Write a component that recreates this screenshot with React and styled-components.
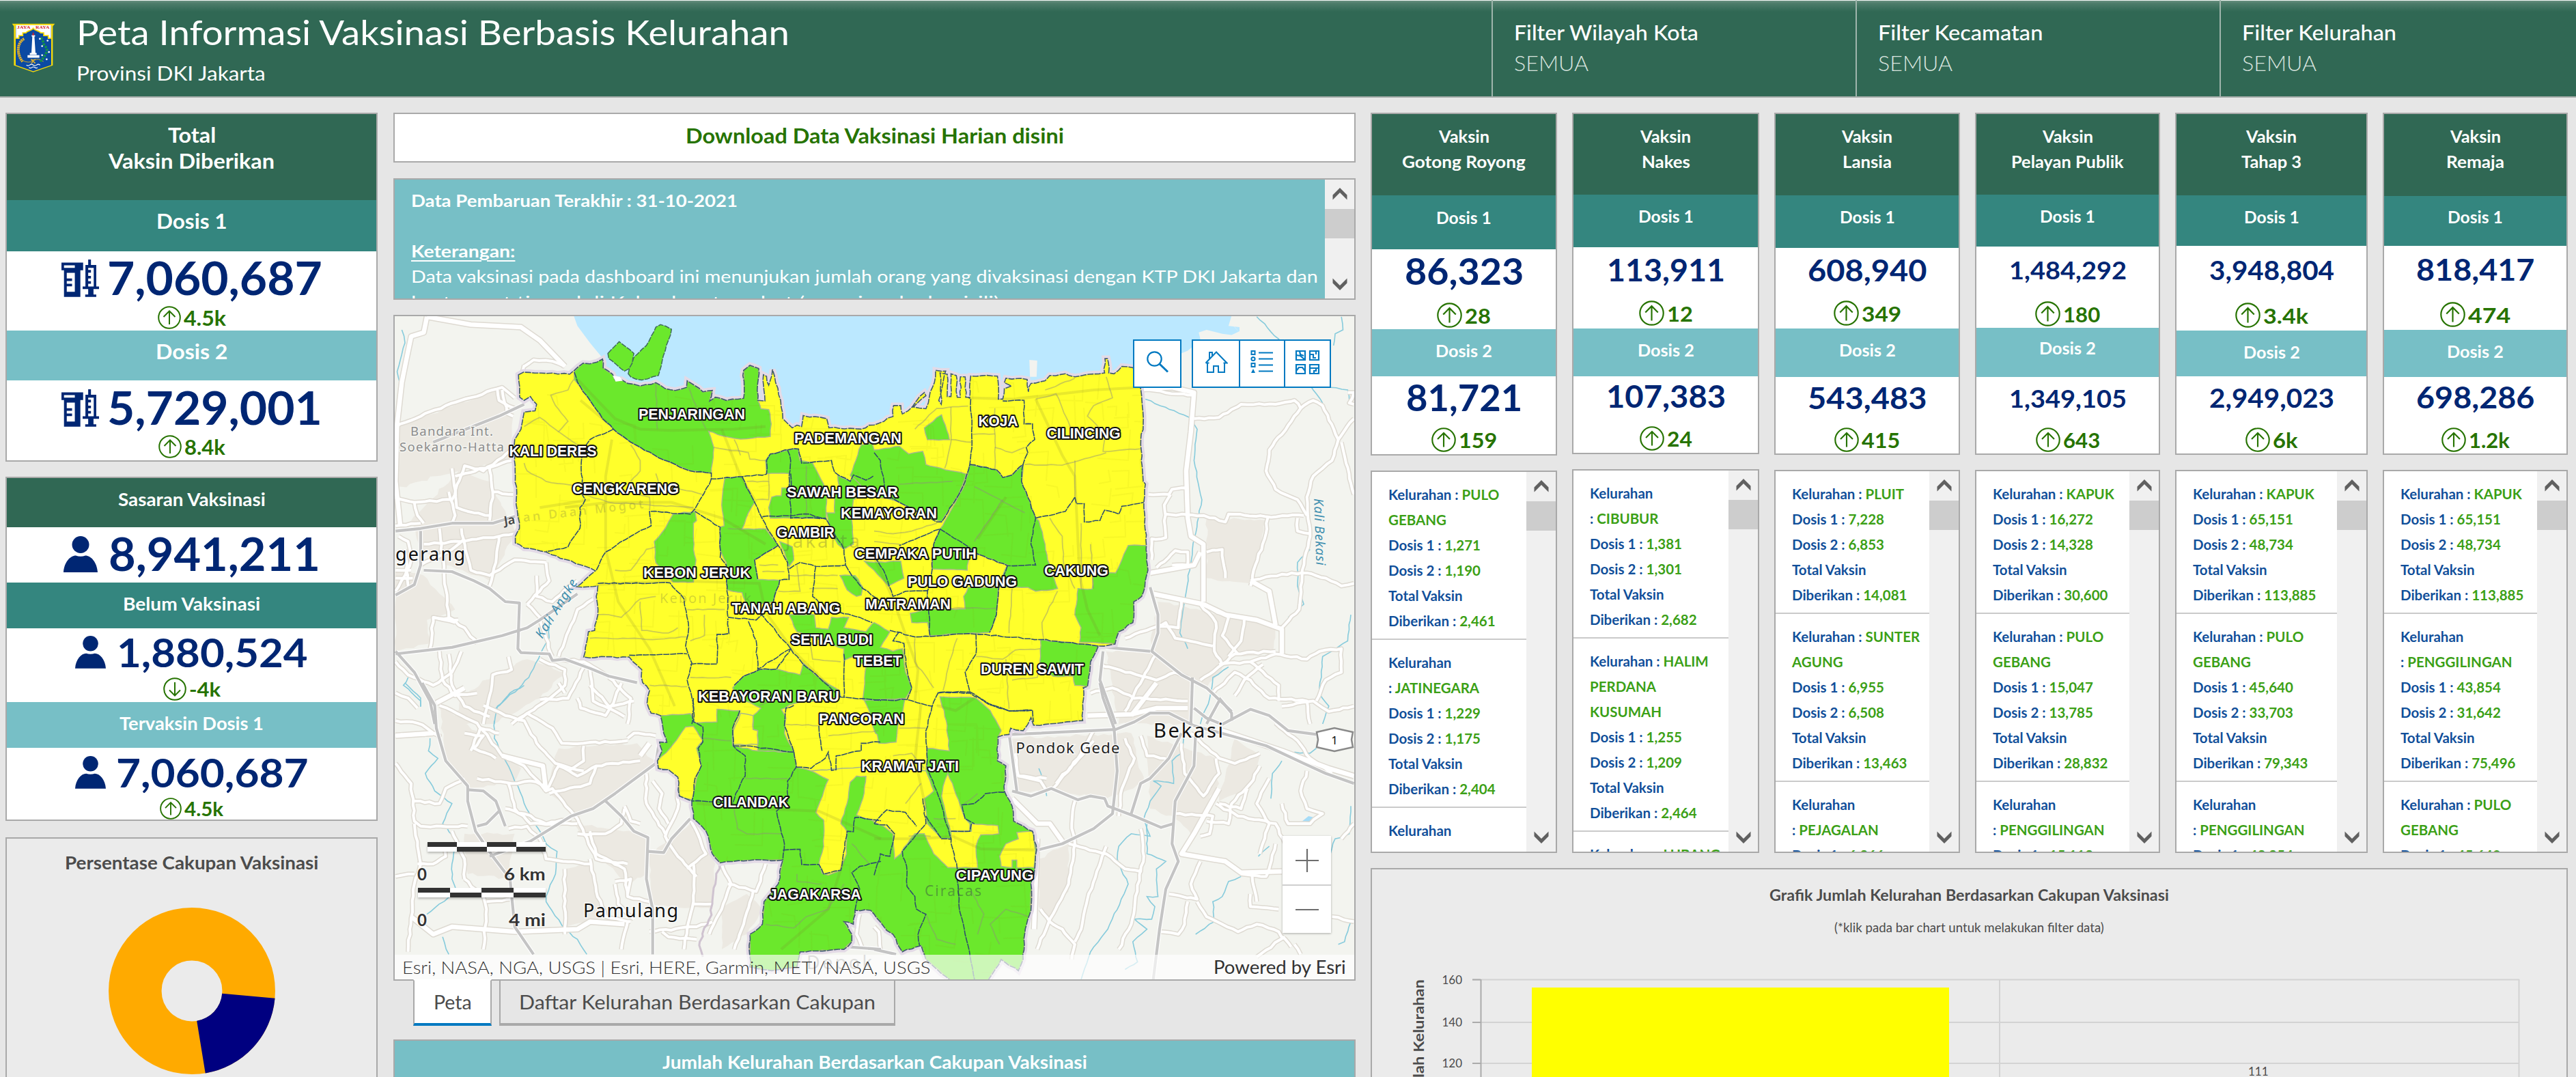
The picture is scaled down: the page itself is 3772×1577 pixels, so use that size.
import React, { useLayoutEffect, useRef, useState } from "react";
import styled, { createGlobalStyle } from "styled-components";

const C = {
  page: "#e6e6e6",
  line: "#a9a9a9",
  dark: "#306854",
  teal: "#34867f",
  light: "#77bfc6",
  navy: "#002673",
  green: "#267300",
  link: "#0079c1",
  grey: "#4c4c4c",
};

const GlobalStyle = createGlobalStyle`
  *, *::before, *::after { box-sizing: border-box; }
  body {
    margin: 0;
    background: ${C.page};
    font-family: Lato, "Open Sans", sans-serif;
    overflow: hidden;
  }
`;

/* ---------- text ---------- */

const Measure = styled.span`
  display: block;
  flex: none;
  width: ${(p) => p.$w}px;
  line-height: ${(p) => p.$lh || p.$size}px;
  height: ${(p) => p.$lh || p.$size}px;
`;

const Line = styled.span`
  display: inline-block;
  white-space: pre;
  transform-origin: 0 50%;
  font-size: ${(p) => p.$size}px;
  font-weight: ${(p) => p.$weight || 400};
  line-height: ${(p) => p.$lh || p.$size}px;
  color: ${(p) => p.$color || "inherit"};
  text-decoration: ${(p) => (p.$underline ? "underline 2px" : "none")};
  text-underline-offset: 4px;
`;

/* Widens or narrows the glyphs of a line so that it fills its measure. */
function Fit({ w, children, ...rest }) {
  const ref = useRef(null);
  const [k, setK] = useState(1);
  useLayoutEffect(() => {
    setK(w / ref.current.offsetWidth);
  }, [w]);
  return (
    <Measure $w={w} $size={rest.$size} $lh={rest.$lh}>
      <Line ref={ref} {...rest} style={{ transform: `scaleX(${k})` }}>
        {children}
      </Line>
    </Measure>
  );
}

/* ---------- page frame ---------- */

const Page = styled.div`
  width: 3772px;
  height: 1577px;
  overflow: hidden;
  display: flex;
  flex-direction: column;
  background: ${C.page};
`;

const Header = styled.header`
  height: 143px;
  flex: none;
  display: flex;
  color: #fff;
  background: linear-gradient(#f4f7f6 0, #f4f7f6 1px, #68907f 1px, #4d7c6a 5px, ${C.dark} 17px);
  border-bottom: 2px solid #a3aba8;
`;

const LogoBox = styled.div`
  width: 112px;
  padding: 34px 0 0 17px;
`;

const Titles = styled.div`
  flex: 1;
  display: flex;
  flex-direction: column;
  align-items: flex-start;
  padding-top: 18px;
  gap: 11px;
`;

const Filters = styled.div`
  display: flex;
`;

const Filter = styled.div`
  width: ${(p) => p.$w}px;
  border-left: 2px solid #9fb5ac;
  padding: 27px 0 0 31px;
  display: flex;
  flex-direction: column;
  align-items: flex-start;
  gap: 5px;
`;

const Main = styled.main`
  display: flex;
  flex: 1;
  min-height: 0;
  padding: 22px 12px 0 8px;
`;

const Column = styled.div`
  width: ${(p) => p.$w}px;
  margin-right: ${(p) => p.$gap || 0}px;
  flex: none;
  display: flex;
  flex-direction: column;
`;

const Panel = styled.section`
  flex: none;
  height: ${(p) => p.$h}px;
  margin-bottom: ${(p) => p.$mb || 0}px;
  border: 2px solid ${C.line};
  background: ${(p) => p.$bg || "#fff"};
  overflow: hidden;
  display: flex;
  flex-direction: column;
`;

const Band = styled.div`
  height: ${(p) => p.$h}px;
  padding-top: ${(p) => p.$pt}px;
  flex: none;
  display: flex;
  flex-direction: column;
  align-items: center;
  color: #fff;
  background: ${(p) => p.$bg};
`;

const MetricBox = styled.div`
  height: ${(p) => p.$h}px;
  padding-top: ${(p) => p.$pt}px;
  flex: none;
  display: flex;
  flex-direction: column;
  align-items: center;
`;

const ValueRow = styled.div`
  display: flex;
  align-items: center;
  gap: ${(p) => p.$gap || 0}px;
  height: ${(p) => p.$h}px;
  color: ${C.navy};
`;

const DeltaRow = styled.div`
  display: flex;
  align-items: center;
  gap: 4px;
  height: 36px;
  margin-top: ${(p) => p.$mt}px;
  color: ${C.green};
`;

/* ---------- icons ---------- */

const VaccineIcon = () => (
  <svg width="55" height="55" viewBox="268 1062 163 163" fill={C.navy}>
    <path
      fillRule="evenodd"
      d="M268 1075h94v34h-12v115h-71v-115h-11zM279 1087v11h47v-11zM291 1120v24h23v11h-23v12h23v11h-23v24h35v-82z"
    />
    <path
      fillRule="evenodd"
      d="M384 1062h12v24h23v93h12v11h-24v24h12v10h-48v-10h13v-24h-24v-11h12v-93h12zM384 1098v9h12v12h-12v14h12v11h-12v12h12v11h-12v12h24v-81z"
    />
  </svg>
);

const PersonIcon = ({ size }) => (
  <svg width={size} height={size * 1.06} viewBox="0 0 50 53" fill={C.navy}>
    <circle cx="25" cy="12.500" r="12.500" />
    <path d="M0 53C1 38 10 28.500 18 28.500Q25 31 32 28.500C40 28.500 49 38 50 53z" />
  </svg>
);

const TrendIcon = ({ size, down }) => (
  <svg width={size} height={size} viewBox="0 0 34 34" fill="none" stroke={C.green} strokeWidth="2">
    <circle cx="17" cy="17" r="15.800" />
    <path d={down ? "M17 7v20M9 18.500l8 8 8-8" : "M17 27V7.500M8.500 16L17 7.500l8.500 8.500"} />
  </svg>
);

const Chevron = ({ up }) => (
  <svg width="22" height="18" viewBox="0 0 22 18" fill="#606060">
    <path d={up ? "M11 0L21.500 10.500V17.500L11 7 .5 17.500V10.500z" : "M11 18L21.500 7.500V.5L11 11 .5.5V7.500z"} />
  </svg>
);

const CityCrest = () => (
  <svg width="64" height="73" viewBox="50 28 192 218">
    <path d="M52 30H240l-9 11V213l-86 30-85-30V41z" fill="#f5d90a" />
    <path d="M68 38H224V211l-79 27-77-27z" fill="#0b4aa2" />
    <path d="M69 36H223V94h-12V82h-20V70h-14c-4-10-24-8-32-20-8 12-28 10-32 20H99v12H82v12H69z" fill="#fff" />
    <path
      d="M69 94h13V82h17V70h14c4-10 24-8 32-20 8 12 28 10 32 20h14v12h20v12h12"
      fill="none"
      stroke="#f5d90a"
      strokeWidth="5"
    />
    <path d="M105 96C74 112 70 160 98 196" fill="none" stroke="#e3b32a" strokeWidth="12" strokeDasharray="7 2" />
    <path d="M96 190q28 16 50 2t44 4" fill="none" stroke="#c9a227" strokeWidth="3" />
    <path d="M178 92c14 10 8 22 16 32s16 18 8 34-12 22-26 38" fill="none" stroke="#159447" strokeWidth="11" strokeDasharray="9 5" />
    <g fill="#fff">
      <circle cx="174" cy="96" r="4" />
      <circle cx="208" cy="104" r="4" />
      <circle cx="184" cy="128" r="4" />
      <circle cx="214" cy="154" r="4" />
      <circle cx="184" cy="168" r="4" />
      <circle cx="204" cy="186" r="4" />
      <path d="M141 84h9l5 76h-18zM138 80h15v6h-15zM130 158h30v8h-30zM120 168h52v11h-52z" />
    </g>
    <path d="M145 66l5 14h-10z" fill="#d8202a" />
    <path d="M135 186q10 6 20 0M137 204l8-10 8 10M136 188l18 14" fill="none" stroke="#e3b32a" strokeWidth="4" />
    <path
      d="M115 211q8 6 15 0t15 0 15 0 15 0M126 222q7 5 13 0t13 0 12 0"
      fill="none"
      stroke="#fff"
      strokeWidth="3.500"
    />
    <text x="73" y="53" fontFamily="Liberation Serif, serif" fontWeight="700" fontSize="17" fill="#d8202a" textLength="60" lengthAdjust="spacingAndGlyphs">JAYA</text>
    <text x="155" y="53" fontFamily="Liberation Serif, serif" fontWeight="700" fontSize="17" fill="#d8202a" textLength="61" lengthAdjust="spacingAndGlyphs">RAYA</text>
  </svg>
);

/* ---------- metrics ---------- */

function Metric({ h, pt, value, size, w, icon, gap, delta, dw, dsize = 30, dmt, circle = 34, down }) {
  return (
    <MetricBox $h={h} $pt={pt}>
      <ValueRow $gap={gap} $h={size}>
        {icon}
        <Fit w={w} $size={size} $weight={700}>{value}</Fit>
      </ValueRow>
      {delta && (
        <DeltaRow $mt={dmt}>
          <TrendIcon size={circle} down={down} />
          <Fit w={dw} $size={dsize} $lh={36} $weight={700}>{delta}</Fit>
        </DeltaRow>
      )}
    </MetricBox>
  );
}

const groups = [
  { w: 273, name: "Gotong Royong", nw: 181, h: 502, rows: [119, 79, 117, 69], tops: [10, 9],
    a: ["86,323", 54, 174, "28", 38], b: ["81,721", 54, 170, "159", 56] },
  { w: 274, name: "Nakes", nw: 71, h: 500, rows: [118, 77, 119, 70], tops: [9, 9],
    a: ["113,911", 45, 173, "12", 38], b: ["107,383", 45, 175, "24", 37] },
  { w: 272, name: "Lansia", nw: 72, h: 501, rows: [119, 77, 118, 71], tops: [9, 9],
    a: ["608,940", 44, 174, "349", 58], b: ["543,483", 44, 174, "415", 56] },
  { w: 271, name: "Pelayan Publik", nw: 165, h: 501, rows: [118, 76, 119, 72], tops: [9, 7],
    a: ["1,484,292", 36, 172, "180", 54], b: ["1,349,105", 36, 172, "643", 54] },
  { w: 282, name: "Tahap 3", nw: 88, h: 501, rows: [119, 74, 124, 67], tops: [9, 9],
    a: ["3,948,804", 38, 183, "3.4k", 66], b: ["2,949,023", 38, 183, "6k", 36] },
  { w: 271, name: "Remaja", nw: 85, h: 501, rows: [120, 73, 123, 69], tops: [8, 9],
    a: ["818,417", 44, 173, "474", 62], b: ["698,286", 44, 173, "1.2k", 60] },
];

/* number baselines measured from the top of each white cell */
const baseA = [53, 51, 49, 48, 50, 51];
const baseB = [52, 47, 47, 45, 46, 46];
const deltaA = [97, 97, 96, 99, 102, 101];
const deltaB = [93, 91, 92, 92, 93, 92];

function GroupCard({ g, i }) {
  const [a, b] = [g.a, g.b];
  const ptA = baseA[i] - a[1] * 0.887;
  const ptB = baseB[i] - b[1] * 0.887;
  const used = g.rows.reduce((s, n) => s + n, 0);
  return (
    <Panel $h={g.h} $mb={22}>
      <Band $bg={C.dark} $h={g.rows[0]} $pt={14}>
        <Fit w={74} $size={24} $lh={37} $weight={700}>Vaksin</Fit>
        <Fit w={g.nw} $size={24} $lh={37} $weight={700}>{g.name}</Fit>
      </Band>
      <Band $bg={C.teal} $h={g.rows[1]} $pt={g.tops[0] + 4}>
        <Fit w={81} $size={24} $lh={37} $weight={700}>Dosis 1</Fit>
      </Band>
      <Metric h={g.rows[2]} pt={ptA} value={a[0]} size={a[1]} w={a[2]} delta={a[3]} dw={a[4]}
        dmt={deltaA[i] - 18 - a[1] - ptA} circle={37} />
      <Band $bg={C.light} $h={g.rows[3]} $pt={g.tops[1] + 4}>
        <Fit w={83} $size={24} $lh={37} $weight={700}>Dosis 2</Fit>
      </Band>
      <Metric h={g.h - 4 - used} pt={ptB} value={b[0]} size={b[1]} w={b[2]} delta={b[3]} dw={b[4]}
        dmt={deltaB[i] - 18 - b[1] - ptB} circle={36} />
    </Panel>
  );
}

/* ---------- scrolling lists ---------- */

const ListPanel = styled.section`
  flex: 1;
  min-height: 0;
  display: flex;
  overflow: hidden;
  background: #fff;
  border: 2px solid ${C.line};
`;

const ListBody = styled.div`
  flex: 1;
  min-width: 0;
  overflow: hidden;
`;

const ListItem = styled.div`
  padding: 15px 0 7px 24px;
  border-bottom: 2px solid #cacaca;
  display: flex;
  flex-direction: column;
  align-items: flex-start;
  height: ${(p) => p.$lines * 37 + 24}px;
`;

const ListLine = styled.div`
  height: 37px;
  line-height: 37px;
  font-size: 20.5px;
  font-weight: 700;
  white-space: pre;
  color: #114f9a;
  b { color: #3ba016; font-weight: 700; }
`;

const Track = styled.div`
  width: 43px;
  flex: none;
  display: flex;
  flex-direction: column;
  align-items: center;
  justify-content: space-between;
  padding: 12px 0;
  background: linear-gradient(#cdcdcd, #cdcdcd) 0 43px / 100% 43px no-repeat #f0f0f0;
`;

const Scrollbar = () => (
  <Track>
    <Chevron up />
    <Chevron />
  </Track>
);

const nm = (first, ...rest) => [["Kelurahan : ", first], ...rest.map((r) => ["", r])];
const nmWrap = (name) => [["Kelurahan", ""], [": ", name]];
const item = (name, d1, d2, total) => [
  ...name,
  ["Dosis 1 : ", d1],
  ["Dosis 2 : ", d2],
  ["Total Vaksin", ""],
  ["Diberikan : ", total],
];

const lists = [
  [item(nm("PULO", "GEBANG"), "1,271", "1,190", "2,461"), item(nmWrap("JATINEGARA"), "1,229", "1,175", "2,404"), [["Kelurahan", ""]]],
  [item(nmWrap("CIBUBUR"), "1,381", "1,301", "2,682"), item(nm("HALIM", "PERDANA", "KUSUMAH"), "1,255", "1,209", "2,464"), nm("LUBANG")],
  [item(nm("PLUIT"), "7,228", "6,853", "14,081"), item(nm("SUNTER", "AGUNG"), "6,955", "6,508", "13,463"), [...nmWrap("PEJAGALAN"), ["Dosis 1 : ", "6,366"]]],
  [item(nm("KAPUK"), "16,272", "14,328", "30,600"), item(nm("PULO", "GEBANG"), "15,047", "13,785", "28,832"), [...nmWrap("PENGGILINGAN"), ["Dosis 1 : ", "15,113"]]],
  [item(nm("KAPUK"), "65,151", "48,734", "113,885"), item(nm("PULO", "GEBANG"), "45,640", "33,703", "79,343"), [...nmWrap("PENGGILINGAN"), ["Dosis 1 : ", "43,854"]]],
  [item(nm("KAPUK"), "65,151", "48,734", "113,885"), item(nmWrap("PENGGILINGAN"), "43,854", "31,642", "75,496"), [...nm("PULO", "GEBANG"), ["Dosis 1 : ", "45,640"]]],
];

const GroupGrid = styled.div`
  height: 1084px;
  flex: none;
  display: flex;
  justify-content: space-between;
  margin-bottom: 22px;
`;

const GroupColumn = styled.div`
  width: ${(p) => p.$w}px;
  display: flex;
  flex-direction: column;
`;

/* ---------- information text ---------- */

const InfoPanel = styled.section`
  height: 178px;
  flex: none;
  margin-bottom: 22px;
  display: flex;
  overflow: hidden;
  border: 2px solid ${C.line};
  background: ${C.light};
  color: #fff;
`;

const InfoText = styled.div`
  flex: 1;
  padding: 11px 0 0 24px;
  height: 174px;
  overflow: hidden;
  display: flex;
  flex-direction: column;
  align-items: flex-start;
`;

const Spacer = styled.div`
  height: ${(p) => p.$h}px;
  flex: none;
`;

/* ---------- map ---------- */

const SHEETS = {
  nw: [570, 460, 0.4592, 0.3827],
  ne: [1280, 460, 0.4592, 0.3827],
  sw: [570, 1000, 0.4592, 0.368],
  se: [1280, 1000, 0.4592, 0.368],
};

const pts = (sheet, list) => {
  const [ox, oy, sx, sy] = SHEETS[sheet];
  return list.trim().split(/\s+/).map((p) => {
    const [x, y] = p.split(",").map(Number);
    return [ox + x * sx, oy + y * sy];
  });
};

let seed = 7;
const rnd = () => {
  seed = (seed * 16807) % 2147483647;
  return seed / 2147483647 - 0.5;
};

/* Breaks every edge into short steps and shifts them slightly, like a surveyed boundary. */
const rough = (list, amp, closed) => {
  const out = [];
  const src = closed ? [...list, list[0]] : list;
  for (let i = 0; i < src.length - 1; i++) {
    const [x1, y1] = src[i];
    const [x2, y2] = src[i + 1];
    const n = Math.max(1, Math.round(Math.hypot(x2 - x1, y2 - y1) / 8));
    for (let k = 0; k < n; k++) {
      const t = k / n;
      const j = k === 0 ? 0 : amp;
      out.push([x1 + (x2 - x1) * t + rnd() * j, y1 + (y2 - y1) * t + rnd() * j]);
    }
  }
  if (!closed) out.push(src[src.length - 1]);
  return out;
};

const toPath = (list, closed) =>
  "M" + list.map(([x, y]) => `${x.toFixed(1)} ${y.toFixed(1)}`).join("L") + (closed ? "Z" : "");

const cityOutline = rough([
  ...pts("nw", "412,232 428,222 575,230 590,215 618,188 640,190 680,172 682,205 712,230 720,252 740,250 760,265 800,275 850,262 880,285 912,292 948,280 950,255 970,270 1000,297 1030,292 1022,332 1040,318 1075,330 1130,322 1130,215 1150,196 1178,208 1175,330 1198,332 1193,232 1203,238 1210,272 1222,212 1232,262 1248,330 1255,400 1285,435 1300,425 1315,430 1320,388 1395,400 1402,435 1505,440 1530,425"),
  ...pts("ne", "0,424 60,392 62,350 85,350 90,382 108,370 160,300 165,312 125,355 165,362 192,262 196,215 228,218 206,330 214,345 210,225 233,230 233,315 245,315 245,228 262,235 265,318 275,318 275,240 290,240 292,318 305,318 308,237 393,237 396,325 410,325 415,285 438,275 415,262 420,245 488,250 492,297 500,265 545,255 560,235 610,228 640,240 735,225 736,170 744,170 748,225 765,228 790,200 826,205 850,285 858,420 850,500 858,640 865,650 860,720 868,885 873,980 863,1045 853,1080 828,1100 825,1180 780,1215 768,1262 715,1270 690,1330 680,1425 665,1430"),
  ...pts("se", "668,20 665,150 600,158 508,168 500,138 490,165 475,190 435,180 430,205 395,215 393,310 420,330 415,430 440,490 445,550 505,590 518,665 510,760 500,800 500,905 480,1000 475,1100 460,1145 405,1100 365,1180 280,1210 240,1180 165,1100 150,1045 90,1070 60,1000 40,985 0,920"),
  ...pts("sw", "1535,905 1485,905 1480,960 1450,950 1475,1000 1475,1030 1450,1060 1310,1070 1300,1130 1220,1145 1150,1130 1150,1000 1190,960 1195,870 1240,800 1255,705 1150,706 1055,716 1030,680 1010,590 970,540 965,470 925,450 920,375 890,345 858,340 855,310 870,270 862,235 885,237 875,200 865,130 835,120 822,80"),
  ...pts("nw", "830,1440 808,1410 805,1360 765,1312 620,1312 635,1215 655,1210 665,1150 660,1080 665,1040 598,1043 657,982 500,910 430,895 402,875 402,850 415,820 408,750 402,620 400,480 420,440 430,375 465,370 470,345 450,315 430,330 416,318"),
], 2.4, true);

const greens = [
  pts("nw", "590,218 618,188 640,190 680,172 682,205 712,230 720,252 740,250 760,265 800,275 850,262 880,285 912,292 948,280 950,255 970,270 1000,297 1030,292 1022,332 1040,318 1075,330 1130,322 1130,215 1150,196 1178,208 1175,330 1185,362 1210,365 1218,420 1215,468 1120,478 1060,465 1018,448 1035,510 1027,608 960,600 860,550 770,490 715,440 680,400 640,330 590,250"),
  pts("nw", "1200,560 1215,535 1275,518 1305,516 1310,560 1350,570 1385,650 1395,700 1393,780 1280,780 1215,780 1210,740 1220,700 1250,695 1252,665 1275,665 1275,610 1203,610"),
  pts("nw", "1070,628 1125,622 1165,720 1145,760 1125,822 1200,822 1240,885 1165,940 1175,1015 1245,1018 1225,1100 1140,1120 1125,1065 1078,1055 1075,950 1055,900 1055,815 1068,810 1060,730"),
  pts("nw", "905,765 975,755 980,790 970,800 970,900 978,940 970,1025 905,1025 850,950 845,870 880,820"),
  pts("nw", "1430,615 1470,640 1480,615 1520,635 1545,618 1545,665 1480,710 1475,790 1480,880 1450,900 1430,880 1400,800 1395,760 1420,760 1420,700 1435,660"),
  [...pts("nw", "1470,618 1505,500 1540,495"), ...pts("ne", "0,520 80,505 110,535 155,525 165,575 293,612 270,690 215,795 140,755 80,720 40,705 0,700")],
  pts("ne", "160,435 215,385 240,480 170,480"),
  pts("ne", "305,575 390,595 410,625 440,615 475,575 470,640 490,700 515,780 525,790 545,880 553,940 585,1050 515,1060 490,1045 395,1045 425,960 335,920 300,925 297,980 185,975 190,880 210,822 250,740 290,650"),
  pts("ne", "300,1045 395,1045 390,1150 368,1218 178,1230 170,1180 120,1180 115,1145 175,1128 290,1128 285,1080"),
  [...pts("nw", "1515,945 1546,950"), ...pts("ne", "85,945 95,1010 45,1040 0,980")],
  pts("nw", "1437,1000 1485,1000 1510,1045 1505,1075 1490,1080 1460,1055"),
  [...pts("nw", "1275,1150 1355,1150 1360,1200 1400,1205 1410,1160 1465,1160 1450,1200 1520,1215 1540,1185"), ...pts("ne", "0,1180 50,1215 20,1275 60,1290 90,1280 100,1370 120,1430 100,1470 0,1477"), ...pts("nw", "1510,1475 1520,1350 1480,1310 1450,1325 1450,1280 1300,1215")],
  [...pts("sw", "1515,70"), ...pts("se", "98,65 90,120 75,170 70,235 15,240 10,205"), ...pts("sw", "1550,200 1530,110")],
  pts("nw", "1245,870 1285,890 1290,940 1275,965 1265,930"),
  [...pts("nw", "1095,1430 1130,1385 1180,1360 1235,1358 1310,1380 1320,1335 1370,1390 1435,1440 1440,1465 1290,1490"), ...pts("sw", "1250,105 1265,140 1260,200 1290,275 1175,270 1175,190 1160,185 1160,130 1185,100 1120,60")],
  [...pts("sw", "1345,350 1298,335 1290,275 1175,270 1095,250 1095,180 1118,110 1045,105 1045,155 975,158 960,122 865,130 875,200 885,237 862,235 870,270 855,310 858,340 890,345 920,375 925,450 965,470 970,540 1010,590 1030,680 1055,716 1150,706 1255,705 1240,800 1195,870 1190,960 1150,1000 1150,1130 1220,1145 1300,1130 1310,1070 1450,1060 1475,1030 1475,1000 1450,950 1480,960 1485,905 1535,905"),
    ...pts("se", "0,920 40,985 60,1000 90,1070 150,1045 165,1100 240,1180 280,1210 365,1180 405,1100 460,1145 475,1100 480,1000 500,905 500,800 510,760 518,665 505,590 445,550 440,490 415,430 420,330 393,310 395,215 405,190 370,110 325,60 210,55 230,150 240,270 170,260 165,350")],
  pts("ne", "810,885 868,885 873,980 863,1045 853,1080 828,1100 825,1180 780,1215 768,1262 655,1255 660,1200 640,1150 650,1050 695,1052 700,990 770,990"),
  pts("ne", "530,1245 715,1270 690,1330 680,1425 640,1420 635,1385 570,1385 530,1350"),
];

const islands = [
  pts("nw", "697,150 733,105 780,150 770,205 750,218 700,170"),
  pts("nw", "762,228 780,165 820,120 850,50 865,40 900,58 880,140 858,235 805,252 770,240"),
];

const yellowInsets = [
  pts("sw", "970,172 1000,230 980,260 995,330 980,380 965,465 925,450 920,375 890,345 858,340 855,310 895,260 925,210 945,175"),
  [...pts("sw", "1345,350 1400,385 1360,515 1385,545 1385,650 1370,720 1380,757 1400,765 1440,745 1458,680 1460,590 1440,560 1460,480 1470,395 1490,370 1520,372 1510,460 1490,525 1545,550"), ...pts("se", "0,555 30,570 60,600 65,700 85,680 95,655 130,600 160,600 190,680 235,735 330,735 325,650 340,605 398,600 395,568 310,560 310,590 245,590 245,620 215,620 170,560 160,460 190,430 165,350"), ...pts("sw", "1546,330")],
  pts("se", "235,360 250,400 275,490 290,540 305,560 305,590 243,590 215,450 220,410"),
  pts("se", "455,595 505,590 514,665 510,735 455,735 455,705 440,705 440,735 405,730 400,690 420,640 460,620"),
  pts("sw", "1120,120 1160,130 1160,185 1175,190 1175,245 1097,245 1097,190"),
];

/* district limits */
const limits = [
  pts("nw", "590,222 600,260 640,330 680,400 715,440 770,490 860,550 960,600 1027,608 1027,630 1125,622 1203,612 1203,560 1215,535 1275,518 1305,516 1315,570 1410,560 1420,605 1470,640 1480,615 1520,635 1545,618"),
  pts("nw", "715,440 640,480 612,530 615,690 625,710 608,740 608,820 570,890 500,908"),
  pts("nw", "1027,630 975,745 960,765 830,755 835,810 770,850 690,910 660,980"),
  pts("nw", "1125,622 1165,720 1205,820 1240,885 1270,950 1275,1015 1245,1018 1225,1100"),
  pts("nw", "975,755 1055,815 1055,930 1075,960 1080,1160 1170,1170 1225,1100"),
  pts("nw", "1240,885 1165,940 1175,1015"),
  pts("nw", "665,1030 895,1028 940,1090 955,1200 945,1270 965,1335 950,1400 970,1490 965,1568"),
  pts("nw", "765,1305 950,1300"),
  pts("nw", "960,1340 1045,1338 1045,1225 1083,1222 1080,1165"),
  pts("nw", "1145,1175 1170,1250 1175,1358 1280,1280 1160,1110"),
  pts("nw", "1280,1280 1320,1340 1370,1390 1440,1465 1568,1478"),
  pts("nw", "1100,1420 1130,1385 1180,1360 1235,1358 1280,1280"),
  pts("nw", "1280,610 1280,780 1390,780 1450,900 1455,960 1360,965 1310,950 1275,975"),
  pts("nw", "1190,775 1340,765 1395,785"),
  pts("nw", "1360,965 1350,1080 1395,1130 1500,1160 1540,1180"),
  pts("nw", "1455,960 1475,1000 1510,1050 1568,1100"),
  pts("nw", "1270,520 1280,560 1275,660"),
  pts("nw", "1450,1300 1450,1465"),
  pts("ne", "0,530 20,560 35,690 80,720 200,795 215,795 270,690 290,640 305,575 312,490 308,325 300,318"),
  pts("ne", "305,575 390,595 410,625 440,615 475,575 490,530 485,510 512,480 505,420 478,420 478,330 410,332"),
  pts("ne", "475,575 470,640 490,700 515,780 500,880 515,960 425,962 335,920 300,890 210,822 80,885"),
  pts("ne", "515,780 560,770 610,755 640,700 645,725 670,725 670,795 720,790 735,750 780,765 790,735 860,720"),
  pts("ne", "210,822 190,880 185,975 170,1060 178,1230"),
  pts("ne", "425,962 398,1040 390,1150 368,1218"),
  pts("ne", "50,1210 130,1235 300,1222 530,1245 715,1270"),
  pts("ne", "325,1222 325,1300 290,1370 305,1445 365,1490 430,1518 505,1515 508,1560"),
  pts("ne", "0,1477 105,1475 185,1500 205,1447 305,1445"),
  pts("ne", "80,1215 60,1250 95,1260 105,1360 120,1430 105,1475"),
  pts("ne", "0,930 30,980 60,1080 100,1060 170,1058"),
  pts("se", "185,90 165,190 168,330 205,450 240,600 265,740 270,880 290,1000 320,1180"),
  pts("se", "205,40 305,40 365,85 430,112 500,108"),
  pts("se", "415,435 355,440 320,480 280,485 290,540 320,560"),
  pts("se", "155,460 165,560 90,670 105,750 105,810 130,850 135,900 165,920 140,1000 145,1045"),
  pts("se", "0,560 40,505 100,515 135,570"),
  pts("se", "245,590 305,590 310,560"),
  pts("se", "165,530 215,620 245,622"),
  pts("sw", "970,60 970,155 1000,175 1000,235 985,260 995,330 975,380 965,470 1060,475"),
  pts("sw", "1118,110 1095,180 1097,250 1135,290 1135,370 1105,440 1095,480"),
  pts("sw", "1097,250 1170,255 1290,275 1260,170 1265,100 1290,90"),
  pts("sw", "1290,275 1298,335 1270,390 1270,470 1235,510 1260,640 1255,705"),
  pts("sw", "1298,335 1345,340 1390,300 1400,275 1410,348 1425,345 1425,290 1505,270 1505,240 1568,235"),
  pts("sw", "1255,665 1310,662 1315,722 1370,722 1385,760 1440,745 1460,590 1480,592 1485,535 1568,548"),
  pts("sw", "1485,905 1500,820 1475,755 1500,730 1568,710"),
  pts("sw", "1370,170 1380,270"),
  pts("se", "0,765 20,680 50,690 65,600 40,565 0,560"),
].map((l) => toPath(rough(l, 2, false)));

/* sub-district limits */
const sublimits = [
  pts("nw", "588,250 570,290 515,310 530,350 570,410 540,450 600,500"),
  pts("nw", "430,430 480,395 540,450"), pts("nw", "430,570 440,600 500,640 610,660"),
  pts("nw", "770,500 800,560 800,600 770,640"), pts("nw", "850,610 860,650 1000,690"),
  pts("nw", "620,690 700,720 830,730 970,740"), pts("nw", "830,750 830,700 770,680"),
  pts("nw", "665,1150 700,1150 740,1160 800,1090 850,1080"), pts("nw", "800,1100 805,1210 890,1220 920,1200"),
  pts("nw", "640,1240 780,1240 840,1245 950,1235"), pts("nw", "720,980 770,980 820,900 850,890"),
  pts("nw", "850,265 855,440"), pts("nw", "955,280 970,330 1010,440"),
  pts("nw", "1035,510 1145,530 1150,555 1200,560"), pts("nw", "1100,480 1120,540"),
  pts("nw", "1140,640 1210,640 1210,610"), pts("nw", "1170,710 1210,710 1210,640"),
  pts("nw", "1180,960 1240,960"), pts("nw", "1190,985 1260,985"), pts("nw", "1275,1000 1430,1000"),
  pts("nw", "1300,960 1310,1060 1240,1060"), pts("nw", "950,1130 1070,1130"), pts("nw", "1005,1150 1005,1230 960,1250"),
  pts("nw", "960,1390 1090,1390"), pts("nw", "980,1440 1090,1470"), pts("nw", "830,1420 950,1425"),
  pts("nw", "1340,1220 1350,1320 1440,1330"), pts("nw", "1340,1050 1430,1050"),
  pts("nw", "1080,820 1110,822 1125,822"), pts("nw", "1330,580 1330,780"),
  pts("ne", "245,355 245,490 225,590"), pts("ne", "130,440 200,360 300,352"), pts("ne", "245,480 310,490"),
  pts("ne", "385,360 385,590"), pts("ne", "315,460 385,458"), pts("ne", "385,510 440,530 480,510"),
  pts("ne", "515,325 580,305 625,430 640,470 740,460"), pts("ne", "740,240 760,320 700,350 680,390 720,440 735,480 730,525 850,515"),
  pts("ne", "480,575 600,578 740,530"), pts("ne", "640,560 640,700"), pts("ne", "545,290 640,245"),
  pts("ne", "560,780 600,850 605,960 640,1050"), pts("ne", "660,800 660,1050"), pts("ne", "690,880 700,1050"),
  pts("ne", "80,650 250,640"), pts("ne", "410,710 320,870"), pts("ne", "320,660 480,760"), pts("ne", "180,1125 390,1125"),
  pts("ne", "440,1050 430,1220"), pts("ne", "585,1060 535,1180 540,1240"), pts("ne", "265,1240 240,1330 220,1440"),
  pts("ne", "420,1320 430,1510"), pts("ne", "325,1310 410,1320 450,1285 530,1280"), pts("ne", "440,1400 520,1390 530,1340"),
  pts("ne", "0,830 60,840 120,830 200,800"), pts("ne", "0,870 80,880 110,940"), pts("ne", "130,1240 130,1330 190,1430"),
  pts("se", "60,290 120,280 160,340"), pts("se", "100,480 150,400"), pts("se", "80,180 165,180"),
  pts("se", "190,540 260,540"), pts("se", "110,610 180,610"), pts("se", "330,440 280,490"),
  pts("se", "310,830 350,920 330,1000"), pts("se", "165,920 200,1020 260,1040"), pts("se", "400,1040 370,960 420,900 490,930"),
  pts("sw", "1000,220 1090,230"), pts("sw", "1135,380 1270,380"), pts("sw", "1100,500 1110,580 1140,600 1250,600"),
  pts("sw", "1200,960 1290,975 1330,930 1400,900 1450,800"), pts("sw", "1180,90 1240,60"), pts("sw", "1265,165 1370,170"),
  pts("sw", "1400,210 1560,190"), pts("sw", "1300,760 1300,790 1380,800"), pts("sw", "1475,640 1530,720"),
].map((l) => toPath(rough(l, 1.6, false)));

/* minor roads of the basemap */
const roads = [
  pts("nw", "20,430 180,350 360,280 380,300 400,320"), pts("nw", "345,290 350,330 400,360"), pts("nw", "360,290 375,380 395,390"),
  pts("nw", "20,700 80,720 200,710 240,580 300,600 390,520"), pts("nw", "80,720 90,770 110,800"), pts("nw", "190,680 210,770 200,800"),
  pts("nw", "320,580 330,680 320,790"), pts("nw", "210,620 390,560"), pts("nw", "330,680 395,690"), pts("nw", "200,590 215,740 270,760 320,770"),
  pts("nw", "20,810 100,800"), pts("nw", "110,880 230,870 350,850 400,840"), pts("nw", "230,820 260,980 320,1000 400,940 500,950"),
  pts("nw", "350,850 340,950 320,1040"), pts("nw", "100,960 200,900 240,860"), pts("nw", "160,820 180,1050 190,1160 240,1200 280,1260"),
  pts("nw", "130,1280 140,1160 210,1180"), pts("nw", "140,1160 220,1170"), pts("nw", "500,950 510,1020 480,1060 440,1110"),
  pts("nw", "440,1110 480,1160 500,1240 520,1310"), pts("nw", "540,1310 600,1130 650,1090"), pts("nw", "470,1000 470,1080 520,1100 600,1020"),
  pts("nw", "380,1310 390,1360 330,1380 320,1460 300,1568"), pts("nw", "190,1300 200,1420 240,1500 320,1540"), pts("nw", "160,1290 170,1400 210,1460 280,1450"),
  pts("nw", "230,1290 200,1370 140,1420 60,1380 20,1330"), pts("nw", "480,1320 560,1360 560,1420 500,1480 390,1568"), pts("nw", "620,1350 570,1470 480,1475"),
  pts("nw", "640,1360 650,1480 750,1540"), pts("nw", "700,1390 770,1470 760,1568"), pts("nw", "640,1420 700,1500 780,1480"), pts("nw", "540,1320 620,1330 690,1380"),
  pts("nw", "30,850 60,870 70,940 50,1000 20,1060"), pts("nw", "20,980 70,980"), pts("nw", "20,1010 75,1010"), pts("nw", "50,900 60,1040"),
  pts("nw", "430,200 460,175 520,180 560,200"), pts("nw", "420,230 430,195"),
  pts("ne", "1020,400 1100,395 1170,345 1280,345 1340,330 1360,360 1400,330 1430,350 1480,480 1460,560 1400,620 1380,700 1390,850 1365,980 1355,1130 1300,1200"),
  pts("ne", "1360,360 1300,460 1260,520 1250,600 1280,670 1350,710 1380,770"), pts("ne", "1480,480 1530,400"), pts("ne", "1490,490 1530,690"),
  pts("ne", "930,765 1050,770 1120,795 1130,765 1250,775 1370,770"), pts("ne", "875,690 940,690 950,670 1000,665"), pts("ne", "945,690 925,730 930,855 885,860 885,940"),
  pts("ne", "1255,780 1245,860 1210,980 1200,1040"), pts("ne", "1060,910 1110,900 1120,1010"), pts("ne", "1350,780 1350,830 1390,840"), pts("ne", "1200,1020 1300,995 1380,990 1440,1010 1490,1040 1530,1030"),
  pts("ne", "1040,1110 1090,1180 1085,1290 1110,1340"), pts("ne", "1080,1130 1130,1160 1110,1230 1160,1300"), pts("ne", "1180,1170 1170,1250 1130,1310"), pts("ne", "890,1070 980,1095 970,1200 910,1195"),
  pts("ne", "800,1240 930,1180 960,1240 1080,1270"), pts("ne", "900,970 960,905 1000,910 1000,960 950,960"), pts("ne", "720,1340 900,1400 960,1370 1000,1390"), pts("ne", "900,1300 830,1450 800,1520"),
  pts("ne", "690,1450 760,1430 830,1470 1000,1480"), pts("ne", "1100,1340 1200,1330 1280,1300 1380,1320 1420,1290 1490,1280 1490,1370 1440,1400 1410,1480"), pts("ne", "1040,1400 1110,1340 1150,1300 1280,1290"),
  pts("ne", "1080,1450 1150,1370 1200,1400 1260,1470 1380,1480 1390,1568"), pts("ne", "1200,1330 1290,1420 1290,1480"), pts("ne", "1150,1460 1180,1400 1240,1340"), pts("ne", "1530,1500 1450,1520 1400,1480 1300,1500"),
  pts("ne", "1510,300 1530,300 1515,340 1530,345"), pts("ne", "860,290 1020,310"),
  pts("se", "450,280 460,370 530,390 550,430"), pts("se", "460,370 550,380"), pts("se", "570,420 640,320 700,230"), pts("se", "800,220 830,300 790,420 780,530"), pts("se", "640,470 630,560 640,640 620,800 560,940 520,1060"),
  pts("se", "530,900 560,950 600,980 640,1040 630,1100"), pts("se", "620,640 740,680 800,740 850,750 860,690 850,580"), pts("se", "740,650 710,750 680,860 660,980 640,1030"), pts("se", "850,740 820,960 780,1060"),
  pts("se", "850,210 870,290 930,300"), pts("se", "980,240 990,360 1050,450 1100,360 1090,300"), pts("se", "1010,200 1100,300 1150,320 1230,280"), pts("se", "960,520 1080,530 1070,600 1040,610"),
  pts("se", "1060,550 1130,560 1140,480 1200,400 1230,330"), pts("se", "1190,420 1170,500 1100,480"), pts("se", "1260,380 1220,480 1260,560 1230,680"), pts("se", "1090,480 1160,530 1280,560 1310,640"),
  pts("se", "1380,350 1360,430 1380,500 1430,520 1390,560 1320,560 1300,480"), pts("se", "940,840 1030,860 1010,800 1040,710"), pts("se", "1030,870 1060,930 1160,990 1220,960 1290,990 1330,1050"),
  pts("se", "1000,870 990,960 970,1000 910,990"), pts("se", "1170,760 1250,770 1280,640"), pts("se", "1310,1010 1220,1090"), pts("se", "1200,840 1200,890 1290,900"), pts("se", "1340,1040 1360,1080"), pts("se", "1280,160 1350,230 1390,300 1460,360"),
  pts("se", "1200,750 1220,870"), pts("se", "700,190 650,300 580,400"), pts("se", "0,970 15,990 20,1060"), pts("se", "1490,620 1530,560"), pts("se", "1460,930 1530,950"),
  pts("sw", "20,150 90,160 160,210 150,210"), pts("sw", "20,210 150,200"), pts("sw", "160,90 200,110 280,160 360,290 430,330 500,430 520,420 600,540 660,700 760,720"),
  pts("sw", "240,200 300,210 270,260 340,300"), pts("sw", "260,270 290,180 350,200"), pts("sw", "300,90 370,130 430,150 470,240 530,320 620,350"),
  pts("sw", "410,150 440,120 520,180 550,240 620,240 760,230"), pts("sw", "620,250 620,310 570,350"), pts("sw", "500,430 540,330 600,370 660,330 800,310"), pts("sw", "660,330 640,400 510,440"),
  pts("sw", "760,220 780,200 850,210"), pts("sw", "600,60 610,100 690,130 720,60 740,0"), pts("sw", "560,40 540,0"), pts("sw", "20,320 70,400 80,550 100,570 250,570"), pts("sw", "80,470 160,480 180,420 240,380"),
  pts("sw", "280,380 390,400 450,390 500,410"), pts("sw", "380,400 400,500 450,560 600,560"), pts("sw", "370,500 430,520 500,560 580,540"), pts("sw", "380,580 440,570 480,620 500,700 640,720"),
  pts("sw", "600,600 690,600 740,560 750,500"), pts("sw", "820,360 820,480 880,600"), pts("sw", "750,490 770,550 800,560"), pts("sw", "920,380 920,500 880,610 920,690 980,770"), pts("sw", "840,390 870,440 860,500 890,560"),
  pts("sw", "80,560 100,720 80,800 60,1070"), pts("sw", "20,770 80,760"), pts("sw", "240,780 300,850 310,900 300,1060"), pts("sw", "310,870 390,860"), pts("sw", "560,740 560,1000"), pts("sw", "640,700 660,830 690,930 770,950"),
  pts("sw", "640,590 660,680 750,740 760,850 830,870"), pts("sw", "720,790 770,780 760,840"), pts("sw", "720,800 730,880 780,940"), pts("sw", "830,990 980,970 1030,950"), pts("sw", "760,950 740,1060"),
  pts("sw", "970,720 970,870 950,980 940,1060"), pts("sw", "970,880 1030,880"), pts("sw", "1060,720 1090,800 1060,900 1020,1000"), pts("sw", "1080,800 1170,830 1200,720"), pts("sw", "1160,830 1130,960 1100,1060"), pts("sw", "870,990 890,1010 980,1020"),
  pts("sw", "1500,920 1490,1000 1510,1060"), pts("sw", "200,590 240,700 240,780"), pts("sw", "170,650 180,690 140,720 90,720"), pts("sw", "960,540 1010,680 950,740"), pts("sw", "20,40 60,60 90,100"),
].map((l) => toPath(rough(l, 2.5, false)));

const wideRoads = [
  pts("nw", "120,10 110,70 70,85 55,170 40,260 25,420 20,640 35,810"),
  pts("nw", "120,10 260,40 420,50 480,100 560,200"),
  pts("ne", "860,285 950,280 1020,300 1010,450 995,600 1000,780 1010,850 1050,880 1050,1100"),
  pts("ne", "890,1070 1050,1110 1120,1150 1220,1170 1300,1205 1300,1300"),
  pts("ne", "880,990 1020,960 1040,910"), pts("ne", "1200,1020 1260,1060 1280,1190"),
  pts("se", "440,460 520,560 560,560 600,630"), pts("se", "1100,420 1020,600 980,680 1120,710 1170,755 1300,750"),
  pts("se", "520,620 510,980"), pts("se", "680,130 820,125 900,100 1000,100"), pts("se", "820,130 900,0"),
  pts("se", "1110,190 1300,270 1450,340 1530,370"),
  pts("sw", "20,210 140,200"), pts("sw", "360,290 490,330 500,430"), pts("sw", "70,930 140,1000 200,970 400,990 600,980 640,950 750,960"), pts("sw", "800,290 830,240"),
  pts("sw", "150,80 240,20"),
].map((l) => toPath(l));

const highways = [
  pts("nw", "20,830 100,820 200,800 330,800 410,770"), pts("nw", "110,980 200,985 270,1020 320,1050 370,1100 415,1105 410,1280 420,1295 510,1300 520,1325 560,1320 640,1355 700,1385 790,1410"),
  pts("nw", "20,1300 200,1275 360,1230 440,1200 480,1170 600,1070"), pts("nw", "20,1290 80,1370 130,1480 145,1568"), pts("nw", "20,1075 80,1035 100,960 100,830"), pts("nw", "140,490 350,390 430,345"),
  pts("ne", "880,1045 905,1150 905,1220 885,1290 980,1380 1060,1430 1140,1520"), pts("ne", "740,1275 880,1290"), pts("ne", "730,1290 720,1400 750,1500 770,1568"),
  pts("ne", "1015,1390 1010,1568"), pts("ne", "1100,1480 1060,1568"),
  pts("se", "440,205 770,185 830,155 880,120 940,120 1020,170 1150,215 1250,250 1370,320 1440,360 1530,400"),
  pts("se", "430,200 455,430"), pts("se", "440,430 500,450 565,420 650,465 690,450 735,460 745,490 830,530 915,575 955,560"), pts("se", "520,665 600,640 700,580 760,520 775,350 765,180 730,60 720,0"),
  pts("se", "980,200 940,300 880,380 850,400 820,520"), pts("se", "1025,200 1020,330 960,470 950,640 970,710 930,820 910,980 890,1180"),
  pts("se", "1110,165 1200,105 1260,130 1320,190 1410,205"), pts("se", "1020,100 1060,140 1110,165"), pts("se", "1100,60 1140,120 1140,150"),
  pts("sw", "105,0 145,90 150,180 180,310 250,410 250,470 275,590 330,690 385,780 400,970 460,1080"),
  pts("sw", "250,425 300,430 340,470 370,570"), pts("sw", "350,510 310,560 280,570"), pts("sw", "320,690 450,630 580,530 650,500 720,440 850,320 860,240"),
  pts("sw", "690,470 740,530 780,590 825,615 820,780 840,900 840,1080"), pts("sw", "825,670 875,675 900,620 960,540"), pts("sw", "1460,1050 1568,1060"), pts("se", "0,1060 70,1080"),
].map((l) => toPath(l));

const streams = [
  pts("nw", "40,60 50,110 25,220 40,290 30,360 20,440"), pts("nw", "510,1240 490,1280 445,1390 415,1430 345,1500 335,1568"), pts("nw", "510,1150 510,1240"),
  pts("nw", "60,1390 45,1420 100,1480 100,1500"), pts("ne", "865,325 1005,395 1030,440 1020,560 1045,710 1015,900 990,1100 975,1220 1000,1280"),
  pts("ne", "1220,10 1290,95 1400,290 1430,340"), pts("ne", "1490,10 1495,60 1470,75 1465,120"), pts("ne", "1455,280 1510,290 1515,330"),
  pts("ne", "1520,1150 1510,1250 1430,1310 1420,1450 1450,1500 1430,1568"), pts("ne", "1390,900 1350,950 1350,1040 1370,1110 1320,1160"),
  pts("ne", "1130,1350 1080,1390 1070,1470 1040,1568"), pts("se", "990,190 980,280 950,310 955,400 890,390 915,410 880,470 860,540 880,610 820,600 780,650 775,700 810,800 745,980 690,1070 660,1180"),
  pts("se", "870,560 870,680 930,710 900,740 905,850 870,850 895,890 885,940 830,940 870,980 825,1030 840,1110 800,1140"),
  pts("se", "1520,490 1515,600 1470,620 1455,680"), pts("se", "1170,770 1130,790 1110,850 1080,870 1085,950 1025,1000"), pts("se", "1520,950 1500,1030 1480,1040"),
  pts("se", "1300,310 1270,360 1265,460"), pts("se", "1410,260 1390,280 1340,275"), pts("se", "525,340 550,450"), pts("se", "1260,650 1225,690"),
  pts("sw", "50,0 100,60 100,95"), pts("sw", "130,220 125,270 155,300 115,360 145,430 200,480 170,560 215,620 200,720 200,780 215,830 120,920"),
  pts("sw", "335,150 335,220 410,410 430,480 500,640 535,670 530,760 500,850 500,870 560,980 600,1020 630,1080"), pts("sw", "170,1010 190,1080"),
  pts("sw", "340,100 385,40 430,10"),
].map((l) => toPath(rough(l, 2, false)));

const urban = [
  pts("nw", "20,430 345,290 395,390 380,560 150,620 20,670"), pts("nw", "70,790 220,600 320,640 400,830 330,1020 180,960 100,900"),
  pts("nw", "20,980 110,1000 210,1130 120,1170 130,1260 20,1290"), pts("nw", "230,1470 330,1380 440,1320 560,1370 480,1470 330,1568 200,1568"),
  pts("ne", "905,1100 1280,1190 1270,1300 1140,1310 1060,1430 880,1290"), pts("ne", "740,1290 880,1290 1010,1390 1010,1568 780,1568"), pts("ne", "1060,780 1250,790 1200,1030 1060,1010"),
  pts("se", "430,220 820,200 860,400 740,460 570,430 460,430"), pts("se", "870,210 1090,300 1100,400 1010,600 960,540 880,500"), pts("se", "1150,220 1230,290 1200,420 1100,470"),
  pts("se", "525,700 620,640 620,830 560,940 525,890"), pts("sw", "160,90 350,260 420,340 400,390 250,420 180,310"), pts("sw", "540,260 790,240 850,320 690,460 590,540 500,420"),
  pts("sw", "590,560 820,600 820,760 760,800 660,680"), pts("sw", "830,680 960,560 1040,720 1030,900 840,880"), pts("sw", "240,600 400,600 380,780 250,760"), pts("sw", "1060,900 1140,840 1190,900 1140,1000 1060,1060"),
  pts("sw", "560,740 640,720 690,930 560,970"),
].map((l) => toPath(rough(l, 4, true), true));

const sea = toPath([
  ...pts("nw", "588,5 600,45 640,110 678,165 690,215 740,260 820,290 900,310 1060,345 1200,350 1260,440 1400,450 1530,450"),
  ...pts("ne", "0,460 120,400 300,340 480,310 700,260 830,240 850,215 1000,140 1020,120 1040,95 1035,70 1060,60 1110,75 1140,80 1165,65 1165,50 1130,45 1140,5"),
], true);

/* street texture inside the city */
const cityStreets = (() => {
  const out = [];
  for (let i = 0; i < 520; i++) {
    const x = 740 + (rnd() + 0.5) * 940;
    const y = 540 + (rnd() + 0.5) * 880;
    const l = 14 + (rnd() + 0.5) * 34;
    const k = rnd() * 8;
    out.push(`M${x.toFixed(0)} ${y.toFixed(0)}${rnd() > 0 ? `l${l.toFixed(0)} ${k.toFixed(0)}l${k.toFixed(0)} ${l.toFixed(0)}` : `l${k.toFixed(0)} ${l.toFixed(0)}l${(-l).toFixed(0)} ${k.toFixed(0)}`}`);
  }
  return out.join("");
})();

const cityRoads = [
  pts("nw", "600,250 720,400 800,440 900,445 1100,440 1200,430"), pts("nw", "710,480 690,620 690,900 730,1100 830,1280 910,1500"),
  pts("nw", "560,740 700,720 900,720 1060,780 1200,880"), pts("nw", "660,1035 900,1020 1180,1030 1200,1140 1290,1290 1400,1420"), pts("nw", "1060,440 1120,620 1170,720"),
  pts("nw", "640,710 480,740"), pts("nw", "610,330 700,420"), pts("ne", "300,320 450,325 700,290 850,280"), pts("ne", "515,325 600,540 640,620 655,1000 680,1130 720,1230"),
  pts("ne", "0,930 60,1090 110,1260 140,1360 130,1480"), pts("ne", "420,700 330,860"),
  pts("se", "200,90 260,110 320,60"), pts("se", "150,80 130,300 165,500"), pts("se", "0,620 150,620 250,610 340,660 510,665"), pts("sw", "980,480 1180,500 1370,510 1460,560 1568,620"),
  pts("sw", "1250,1060 1400,900 1450,700"),
].map((l) => toPath(l));

const labels = [
  ["PENJARINGAN", 934, 614, 158], ["KALI DERES", 744.5, 668, 130], ["CENGKARENG", 837, 723, 158], ["KEBON JERUK", 941, 846.5, 159],
  ["TANAH ABANG", 1070.5, 898, 161], ["SETIA BUDI", 1157, 944.5, 122], ["TEBET", 1249.6, 975, 72], ["KEBAYORAN BARU", 1021, 1027, 209],
  ["PANCORAN", 1198, 1060.5, 127], ["PADEMANGAN", 1162, 649.5, 159], ["SAWAH BESAR", 1151, 728.5, 165], ["KEMAYORAN", 1230, 759, 143],
  ["GAMBIR", 1136, 787.5, 87], ["CEMPAKA PUTIH", 1250, 818.5, 181], ["PULO GADUNG", 1328, 859, 162], ["MATRAMAN", 1266, 892.5, 127],
  ["KOJA", 1431.5, 624.5, 60], ["CILINCING", 1531.6, 642, 110], ["CAKUNG", 1528, 843.5, 96], ["DUREN SAWIT", 1435, 987, 153],
  ["KRAMAT JATI", 1260, 1129, 145], ["CILANDAK", 1043, 1182, 113], ["JAGAKARSA", 1125, 1317, 137], ["CIPAYUNG", 1398.5, 1289, 116],
];

const MapFrame = styled.section`
  position: relative;
  flex: none;
  height: 975px;
  border: 2px solid ${C.line};
  overflow: hidden;
  background: #f3f3ef;
`;

const MapSvg = styled.svg`
  display: block;
`;

function JakartaMap() {
  return (
    <MapSvg width="1405" height="971" viewBox="578 463 1405 971">
      <defs>
        <clipPath id="city">
          <path d={toPath(cityOutline, true)} />
        </clipPath>
      </defs>
      <rect x="578" y="463" width="1405" height="971" fill="#f3f4ef" />
      <g fill="#ece9e2">{urban.map((d, i) => <path key={i} d={d} />)}</g>
      <path d={sea} fill="#bbe8ff" />
      <path d={toPath(pts("ne", "495,175 520,178 518,240 497,240"), true)} fill="#f3f3ef" />
      <path d={toPath(pts("ne", "1130,25 1180,90 1150,50"), true)} fill="#f3f3ef" />
      <path d={toPath(pts("se", "1365,550 1385,530 1420,540 1395,545 1385,565"), true)} fill="#a6dcf7" />
      <g fill="none" stroke="#86cbdc" strokeWidth="1.600">{streams.map((d, i) => <path key={i} d={d} />)}</g>
      <g fill="none" stroke="#dedad2" strokeWidth="7" strokeLinejoin="round">{roads.map((d, i) => <path key={i} d={d} />)}</g>
      <g fill="none" stroke="#dedad2" strokeWidth="9.500" strokeLinejoin="round">{wideRoads.map((d, i) => <path key={i} d={d} />)}</g>
      <g fill="none" stroke="#fff" strokeWidth="4" strokeLinejoin="round">{roads.map((d, i) => <path key={i} d={d} />)}</g>
      <g fill="none" stroke="#fff" strokeWidth="6.500" strokeLinejoin="round">{wideRoads.map((d, i) => <path key={i} d={d} />)}</g>
      <g fill="none" stroke="#fff" strokeWidth="6.500" strokeLinejoin="round">{highways.map((d, i) => <path key={i} d={d} />)}</g>
      <g fill="none" stroke="#c4c4c4" strokeWidth="4.200" strokeLinejoin="round">{highways.map((d, i) => <path key={i} d={d} />)}</g>
      <path d={toPath(rough(pts("sw", "1052,716 1040,800 1030,880 1015,960 990,1030 1000,1090"), 5, false))} fill="none" stroke="#cfc3d0" strokeWidth="3" />

      <path d={toPath(cityOutline, true)} fill="#ffff2b" stroke="#e3dae6" strokeWidth="9" />
      <path d={toPath(cityOutline, true)} fill="#ffff2b" />
      <g clipPath="url(#city)">
        <g fill="#6be82c" stroke="#a9b88a" strokeWidth="1.500">
          {greens.map((g, i) => <path key={i} d={toPath(rough(g, 1.6, true), true)} />)}
        </g>
        <g fill="#ffff2b" stroke="#a9b88a" strokeWidth="1.500">
          {yellowInsets.map((g, i) => <path key={i} d={toPath(rough(g, 1.6, true), true)} />)}
        </g>
        <path d={cityStreets} fill="none" stroke="#8a8a10" strokeOpacity="0.07" strokeWidth="2" />
        <g fill="none" stroke="#7f7f30" strokeOpacity="0.17" strokeWidth="4">{cityRoads.map((d, i) => <path key={i} d={d} />)}</g>
        <g fill="none" stroke="#8f8f7a" strokeOpacity="0.45" strokeWidth="1.800">{sublimits.map((d, i) => <path key={i} d={d} />)}</g>
        <g fill="none" stroke="#2f4f6d" strokeWidth="1.600" strokeDasharray="9 1">{limits.map((d, i) => <path key={i} d={d} />)}</g>
      </g>
      <path d={toPath(cityOutline, true)} fill="none" stroke="#40596f" strokeWidth="1.600" strokeDasharray="9 1.500" />
      {islands.map((g, i) => (
        <path key={i} d={toPath(rough(g, 2, true), true)} fill="#6be82c" stroke="#3f6c5c" strokeWidth="1.500" strokeDasharray="8 1.500" />
      ))}
      <path d={toPath(pts("nw", "712,235 722,258 745,255 735,240"), true)} fill="#fff" />

      <g fontFamily="Noto Sans, sans-serif" fill="#111">
        <g fontSize="18.500" fill="#8c8c8c" stroke="#f3f3ef" strokeWidth="3" paintOrder="stroke">
          <text x="601" y="637.500" textLength="121">Bandara Int.</text>
          <text x="585" y="661" textLength="153">Soekarno-Hatta</text>
        </g>
        <g stroke="#fff" strokeWidth="3" strokeOpacity="0.700" paintOrder="stroke">
          <text x="579" y="820.500" fontSize="27" textLength="102">gerang</text>
          <text x="854" y="1343" fontSize="27" textLength="139">Pamulang</text>
          <text x="1689" y="1080" fontSize="29" textLength="102">Bekasi</text>
          <text x="1487.500" y="1103" fontSize="22" textLength="152" fill="#222">Pondok Gede</text>
        </g>
        <text x="739" y="769" fontSize="18" fontWeight="600" fill="#444" transform="rotate(-9 739 769)">Ja</text>
        <text x="758" y="765" fontSize="18" fontWeight="600" fillOpacity="0.220" fill="#554" textLength="186" transform="rotate(-6.500 758 765)">lan Daan Mogot</text>
        <text x="966" y="882.500" fontSize="20" fillOpacity="0.250" fill="#554" textLength="134">Kebon Jeruk</text>
        <text x="1150" y="801.500" fontSize="28" fillOpacity="0.280" fill="#554" textLength="109">Jakarta</text>
        <text x="1354" y="1312" fontSize="21" fillOpacity="0.450" fill="#344" textLength="83">Ciracas</text>
        <text x="1181" y="1419" fontSize="27" fillOpacity="0.500" fill="#444" textLength="96">Depok</text>
        <g fontSize="19" fontStyle="italic" fill="#3f8fb0">
          <text x="794" y="936" textLength="98" transform="rotate(-58 794 936)">Kali Angke</text>
          <text x="1924" y="730" textLength="98" transform="rotate(88 1924 730)">Kali Bekasi</text>
        </g>
        <path d="M1928 1072L1954 1066L1981 1072L1979 1083L1981 1094L1954 1100L1928 1094L1930 1083Z" fill="#fff" stroke="#8a8a8a" strokeWidth="2.500" />
        <text x="1954" y="1090" fontSize="17" textAnchor="middle">1</text>
      </g>

      <g fontFamily="Liberation Sans, Arial, sans-serif" fontWeight="700" fontSize="21.500" fill="#fff" stroke="#111" strokeWidth="4" strokeLinejoin="round" paintOrder="stroke">
        {labels.map(([t, x, y, w]) => (
          <text key={t} x={x + 1} y={y - 0.5} textLength={w - 2} lengthAdjust="spacingAndGlyphs">{t}</text>
        ))}
      </g>
    </MapSvg>
  );
}

const ToolGroup = styled.div`
  position: absolute;
  top: ${497 - 463}px;
  left: ${(p) => p.$left}px;
  height: 71px;
  display: flex;
  background: #fff;
  border: 2px solid ${C.link};
`;

const ToolButton = styled.div`
  width: ${(p) => p.$w}px;
  display: flex;
  align-items: center;
  justify-content: center;
  padding-bottom: 5px;
  & + & { border-left: 2px solid ${C.link}; }
`;

const ZoomBox = styled.div`
  position: absolute;
  left: 1300px;
  top: 761px;
  width: 71px;
  background: #fff;
  box-shadow: 0 1px 3px rgba(0, 0, 0, 0.3);
`;

const ZoomButton = styled.div`
  height: 71px;
  display: flex;
  align-items: center;
  justify-content: center;
  & + & { border-top: 2px solid #cfcfcf; }
`;

const Attribution = styled.div`
  position: absolute;
  left: 0;
  right: 0;
  bottom: 0;
  height: 36px;
  padding: 0 12px 0 11px;
  display: flex;
  justify-content: space-between;
  align-items: center;
  background: rgba(255, 255, 255, 0.66);
  color: #323232;
`;

const ScaleBars = styled.div`
  position: absolute;
  left: 31px;
  top: 770px;
  width: 190px;
  display: flex;
  flex-direction: column;
  align-items: flex-end;
`;

const ScaleStrip = styled.div`
  width: ${(p) => p.$w}px;
  height: 14px;
  box-shadow: 0 2px 3px rgba(0, 0, 0, 0.25);
  background:
    repeating-linear-gradient(90deg, #323232 0 25%, #fff 25% 50%) 0 0 / 100% 7px no-repeat,
    repeating-linear-gradient(90deg, #fff 0 25%, #323232 25% 50%) 0 7px / 100% 7px no-repeat;
`;

const ScaleLabels = styled.div`
  width: 188px;
  height: 53px;
  padding-top: 23px;
  display: flex;
  justify-content: space-between;
  color: #323232;
  text-shadow: 0 0 3px #fff, 0 0 3px #fff;
`;

const Tabs = styled.div`
  display: flex;
  gap: 11px;
  height: 68px;
  margin: -2px 0 20px 29px;
  flex: none;
  position: relative;
`;

const Tab = styled.div`
  width: ${(p) => p.$w}px;
  display: flex;
  justify-content: center;
  padding-top: 11px;
  color: ${C.grey};
  background: ${(p) => (p.$active ? "#fff" : "#e6e6e6")};
  border: 2px solid ${C.line};
  border-top-color: ${(p) => (p.$active ? "#fff" : C.line)};
  border-bottom: 4px solid ${(p) => (p.$active ? C.link : C.line)};
`;

/* ---------- charts ---------- */

const DonutBox = styled.div`
  display: flex;
  justify-content: center;
  margin-top: 45px;
`;

const pol = (r, deg) => {
  const a = (deg * Math.PI) / 180;
  return `${(123 + r * Math.cos(a)).toFixed(2)} ${(123 + r * Math.sin(a)).toFixed(2)}`;
};

const Donut = () => (
  <svg width="246" height="246" viewBox="0 0 246 246">
    <circle cx="123" cy="123" r="83.200" fill="none" stroke="#ffaa00" strokeWidth="77.500" />
    <path d={`M${pol(122, 5)}A122 122 0 0 1 ${pol(122, 80.7)}L${pol(44.4, 80.7)}A44.400 44.400 0 0 0 ${pol(44.4, 5)}Z`} fill="#000080" />
  </svg>
);

const ChartArea = styled.div`
  display: flex;
  align-items: flex-start;
  flex: none;
`;

function BarChart() {
  const tick = { fontSize: 17, fill: "#4c4c4c", textAnchor: "end" };
  return (
    <svg width="1749" height="300" viewBox="2009 1400 1749 300" fontFamily="Lato, sans-serif">
      <g stroke="#d3d3d3" strokeWidth="2" fill="none">
        <path d="M2156 1434.500H3689M2156 1497H3689M2156 1557H3689M2928 1434V1700M3688.500 1434V1700" />
      </g>
      <path d="M2168.500 1434V1700M2156 1434.500h12M2156 1497h12M2156 1557h12" stroke="#ababab" strokeWidth="2" fill="none" />
      <rect x="2243" y="1446" width="611" height="260" fill="#ffff00" />
      <text x="2141" y="1441" {...tick}>160</text>
      <text x="2141" y="1503" {...tick}>140</text>
      <text x="2141" y="1563" {...tick}>120</text>
      <text x="3292" y="1575" fontSize="17" fill="#4c4c4c">111</text>
      <text transform="translate(2085 1434) rotate(-90)" fontSize="21" fontWeight="700" fill={C.grey} textAnchor="end" textLength="187" lengthAdjust="spacingAndGlyphs">
        Jumlah Kelurahan
      </text>
    </svg>
  );
}

/* ---------- app ---------- */

export default function App() {
  return (
    <Page>
      <GlobalStyle />
      <Header>
        <LogoBox><CityCrest /></LogoBox>
        <Titles>
          <Fit w={1044} $size={51} $lh={58}>Peta Informasi Vaksinasi Berbasis Kelurahan</Fit>
          <Fit w={277} $size={29} $lh={40}>Provinsi DKI Jakarta</Fit>
        </Titles>
        <Filters>
          {[["Filter Wilayah Kota", 270, 533], ["Filter Kecamatan", 241, 533], ["Filter Kelurahan", 226, 522]].map(([t, w, fw]) => (
            <Filter key={t} $w={fw}>
              <Fit w={w} $size={30} $lh={40} $weight={500}>{t}</Fit>
              <Fit w={109} $size={31} $lh={40} $weight={300} $color="#d9e4df">SEMUA</Fit>
            </Filter>
          ))}
        </Filters>
      </Header>

      <Main>
        <Column $w={545} $gap={23}>
          <Panel $h={511} $mb={22}>
            <Band $bg={C.dark} $h={126} $pt={11}>
              <Fit w={70} $size={30} $lh={38} $weight={700}>Total</Fit>
              <Fit w={243} $size={30} $lh={38} $weight={700}>Vaksin Diberikan</Fit>
            </Band>
            <Band $bg={C.teal} $h={75} $pt={11}>
              <Fit w={104} $size={30} $lh={38} $weight={700}>Dosis 1</Fit>
            </Band>
            <Metric h={116} pt={6} icon={<VaccineIcon />} gap={12} value="7,060,687" size={66} w={315} delta="4.5k" dw={62} dmt={7} />
            <Band $bg={C.light} $h={73} $pt={11}>
              <Fit w={106} $size={30} $lh={38} $weight={700}>Dosis 2</Fit>
            </Band>
            <Metric h={117} pt={7} icon={<VaccineIcon />} gap={12} value="5,729,001" size={66} w={315} delta="8.4k" dw={60} dmt={6} />
          </Panel>

          <Panel $h={504} $mb={24}>
            <Band $bg={C.dark} $h={72} $pt={12}>
              <Fit w={216} $size={26} $lh={38} $weight={700}>Sasaran Vaksinasi</Fit>
            </Band>
            <Metric h={81} pt={6} icon={<PersonIcon size={50} />} gap={16} value="8,941,211" size={66} w={310} />
            <Band $bg={C.teal} $h={67} $pt={12}>
              <Fit w={201} $size={26} $lh={38} $weight={700}>Belum Vaksinasi</Fit>
            </Band>
            <Metric h={108} pt={6} icon={<PersonIcon size={45} />} gap={16} value="1,880,524" size={58} w={280} delta="-4k" dw={46} dsize={29} dmt={7} down />
            <Band $bg={C.light} $h={67} $pt={12}>
              <Fit w={211} $size={26} $lh={38} $weight={700}>Tervaksin Dosis 1</Fit>
            </Band>
            <Metric h={105} pt={7} icon={<PersonIcon size={45} />} gap={15} value="7,060,687" size={58} w={282} delta="4.5k" dw={57} dsize={28} dmt={6} circle={32} />
          </Panel>

          <Panel $h={500} $bg="#ebebeb">
            <Band $bg="transparent" $h={55} $pt={16}>
              <Fit w={371} $size={26} $lh={38} $weight={700} $color={C.grey}>Persentase Cakupan Vaksinasi</Fit>
            </Band>
            <DonutBox><Donut /></DonutBox>
          </Panel>
        </Column>

        <Column $w={1409} $gap={22}>
          <Panel $h={73} $mb={23}>
            <Band $bg="#fff" $h={69} $pt={12}>
              <Fit w={554} $size={31} $lh={38} $weight={700} $color={C.green}>Download Data Vaksinasi Harian disini</Fit>
            </Band>
          </Panel>

          <InfoPanel>
            <InfoText>
              <Fit w={478} $size={25} $lh={38} $weight={700}>Data Pembaruan Terakhir : 31-10-2021</Fit>
              <Spacer $h={36} />
              <Fit w={152} $size={25} $lh={38} $weight={700} $underline>Keterangan:</Fit>
              <Fit w={1328} $size={25} $lh={37}>Data vaksinasi pada dashboard ini menunjukan jumlah orang yang divaksinasi dengan KTP DKI Jakarta dan</Fit>
              <Fit w={861} $size={25} $lh={38}>bertempat tinggal di Kelurahan tersebut (sesuai pada domisili)</Fit>
            </InfoText>
            <Scrollbar />
          </InfoPanel>

          <MapFrame>
            <JakartaMap />
            <ToolGroup $left={1081}>
              <ToolButton $w={67}>
                <svg width="34" height="34" viewBox="0 0 34 34" fill="none" stroke={C.link} strokeWidth="2.200">
                  <circle cx="12.500" cy="12.500" r="10.200" />
                  <path d="M20 20l12 11.500" strokeWidth="3" />
                </svg>
              </ToolButton>
            </ToolGroup>
            <ToolGroup $left={1167}>
              <ToolButton $w={67}>
                <svg width="34" height="34" viewBox="0 0 34 34" fill="none" stroke={C.link} strokeWidth="2">
                  <path d="M4 18v14h9v-9h7v9h9V18M1.500 18.500L17 2.500l15.500 16h-5M1.500 18.500h5M7 12V3h4v5" />
                </svg>
              </ToolButton>
              <ToolButton $w={66}>
                <svg width="34" height="36" viewBox="0 0 34 36" fill="none" stroke={C.link} strokeWidth="2">
                  <path d="M12 4.500h21M12 13.500h21M12 22.500h21M12 31.500h21" />
                  <path d="M1.500 2h5v5h-5zM1.500 20h5v5h-5z" />
                  <circle cx="4" cy="13.500" r="2.600" />
                  <path d="M4 28l3 6H1z" fill={C.link} stroke="none" />
                </svg>
              </ToolButton>
              <ToolButton $w={67}>
                <svg width="37" height="37" viewBox="0 0 37 37" fill="none" stroke={C.link} strokeWidth="2.200">
                  <path d="M2 2h13v13H2zM22 2h13v13H22zM2 22h13v13H2zM22 22h13v13H22z" />
                  <path d="M2 8l6 1 7 6M7 2l1 5 5 2M22 7h5v5h4M31 2v5M2 31l4-5h5l4 5M22 27h13M28 35v-4h3v-4" />
                </svg>
              </ToolButton>
            </ToolGroup>
            <ScaleBars>
              <ScaleStrip $w={173} />
              <ScaleLabels>
                <Fit w={14} $size={24} $lh={20} $weight={700}>0</Fit>
                <Fit w={61} $size={24} $lh={20} $weight={700}>6 km</Fit>
              </ScaleLabels>
              <ScaleStrip $w={187} />
              <ScaleLabels>
                <Fit w={14} $size={24} $lh={20} $weight={700}>0</Fit>
                <Fit w={54} $size={24} $lh={20} $weight={700}>4 mi</Fit>
              </ScaleLabels>
            </ScaleBars>
            <ZoomBox>
              <ZoomButton>
                <svg width="34" height="34" stroke="#6e6e6e" strokeWidth="2.200"><path d="M17 0v34M0 17h34" /></svg>
              </ZoomButton>
              <ZoomButton>
                <svg width="34" height="34" stroke="#6e6e6e" strokeWidth="2.200"><path d="M0 17h34" /></svg>
              </ZoomButton>
            </ZoomBox>
            <Attribution>
              <Fit w={774} $size={26} $lh={36} $weight={300}>Esri, NASA, NGA, USGS | Esri, HERE, Garmin, METI/NASA, USGS</Fit>
              <Fit w={194} $size={26} $lh={36}>Powered by Esri</Fit>
            </Attribution>
          </MapFrame>

          <Tabs>
            <Tab $w={115} $active><Fit w={56} $size={28} $lh={40}>Peta</Fit></Tab>
            <Tab $w={580}><Fit w={522} $size={28} $lh={40}>Daftar Kelurahan Berdasarkan Cakupan</Fit></Tab>
          </Tabs>

          <Panel $h={200} $bg={C.light}>
            <Band $bg={C.light} $h={80} $pt={12}>
              <Fit w={622} $size={26} $lh={38} $weight={700}>Jumlah Kelurahan Berdasarkan Cakupan Vaksinasi</Fit>
            </Band>
          </Panel>
        </Column>

        <Column $w={1753}>
          <GroupGrid>
            {groups.map((g, i) => (
              <GroupColumn key={g.name} $w={g.w}>
                <GroupCard g={g} i={i} />
                <ListPanel>
                  <ListBody>
                    {lists[i].map((lines, k) => (
                      <ListItem key={k} $lines={k === 2 ? 7 : lines.length}>
                        {lines.map(([label, val], n) => (
                          <ListLine key={n}>{label}<b>{val}</b></ListLine>
                        ))}
                      </ListItem>
                    ))}
                  </ListBody>
                  <Scrollbar />
                </ListPanel>
              </GroupColumn>
            ))}
          </GroupGrid>

          <Panel $h={500} $bg="#ebebeb">
            <Band $bg="transparent" $h={127} $pt={18}>
              <Fit w={585} $size={23} $lh={38} $weight={700} $color={C.grey}>Grafik Jumlah Kelurahan Berdasarkan Cakupan Vaksinasi</Fit>
              <Spacer $h={11} />
              <Fit w={395} $size={18.5} $lh={36} $color={C.grey}>(*klik pada bar chart untuk melakukan filter data)</Fit>
            </Band>
            <ChartArea><BarChart /></ChartArea>
          </Panel>
        </Column>
      </Main>
    </Page>
  );
}
